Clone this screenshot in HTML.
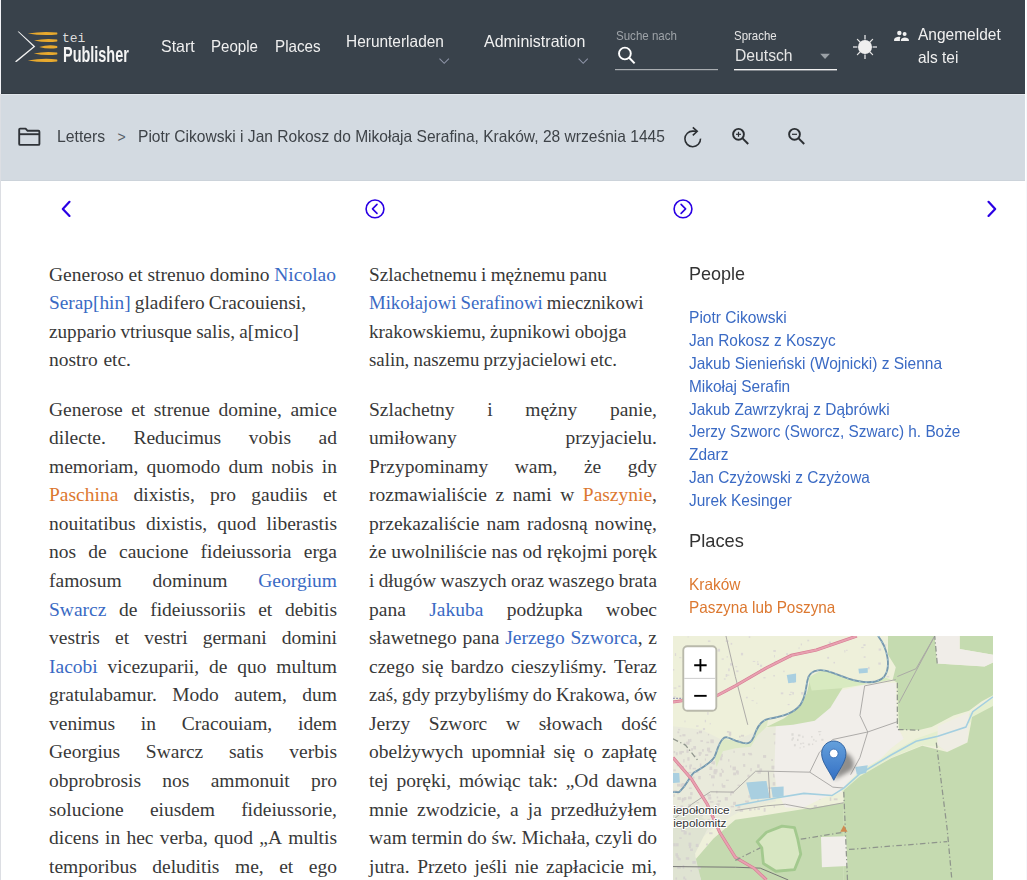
<!DOCTYPE html>
<html><head><meta charset="utf-8"><title>TEI Publisher</title>
<style>
html,body{margin:0;padding:0;background:#fff;width:1027px;height:880px;overflow:hidden;position:relative}
.t{position:absolute;white-space:nowrap}
.ln{position:absolute;font-family:'Liberation Serif', serif;font-size:19.5px;line-height:19.5px;color:#383838;white-space:nowrap;display:flex;justify-content:space-between}
.b{color:#3a6ac4}
.o{color:#dc7830}
#lborder{position:absolute;left:0;top:0;width:1px;height:880px;background:#f3f3f7}
#lborder2{position:absolute;left:0;top:94px;width:1px;height:786px;background:#dcdee3}
#rborder{position:absolute;left:1026px;top:0;width:1px;height:880px;background:#f6f7fb}
#header{position:absolute;left:1px;top:0;width:1024px;height:94px;background:#39424b;overflow:hidden}
#hshadow{position:absolute;left:1px;top:93px;width:1024px;height:1px;background:#323a42}
#toolbar{position:absolute;left:1px;top:94px;width:1024px;height:87px;background:#d3dae1}
#ttop{position:absolute;left:1px;top:94px;width:1024px;height:1px;background:#e1e6eb}
#tbot{position:absolute;left:1px;top:180px;width:1024px;height:1px;background:#ccd3da}
#map{position:absolute;left:673px;top:636px;width:320px;height:244px;overflow:hidden;background:#eef0d8}
</style></head><body>
<div id="lborder"></div><div id="lborder2"></div><div id="rborder"></div>
<div id="header"><div style="position:absolute;left:-1px;top:0;width:1027px;height:94px"><svg style="position:absolute;left:0;top:0" width="140" height="94" viewBox="0 0 140 94">
<path d="M17.6 31.6 L18.8 31.4 L35.3 46.6 L16.6 61.9 L14.9 61.6 L33.3 46.6 Z" fill="#f2f2f2"/>
<g fill="#e8a92e"><path d="M27.8 33.5 Q42.5 31.00 57.1 32.50 Q57.6 33.5 57.1 34.50 Q42.5 36.00 27.8 33.5 Z"/><path d="M34.0 40.5 Q45.5 38.00 57.1 39.50 Q57.6 40.5 57.1 41.50 Q45.5 43.00 34.0 40.5 Z"/><path d="M39.2 46.9 Q48.2 44.40 57.1 45.90 Q57.6 46.9 57.1 47.90 Q48.2 49.40 39.2 46.9 Z"/><path d="M33.7 53.5 Q45.4 51.00 57.1 52.50 Q57.6 53.5 57.1 54.50 Q45.4 56.00 33.7 53.5 Z"/><path d="M27.8 60.4 Q42.5 57.90 57.1 59.40 Q57.6 60.4 57.1 61.40 Q42.5 62.90 27.8 60.4 Z"/></g></svg><svg style="position:absolute;left:0;top:0" width="1024" height="94" viewBox="0 0 1024 94">
<!-- dropdown chevrons -->
<path d="M439.5 58.6 L444.2 63.3 L448.9 58.6" fill="none" stroke="#8d93a6" stroke-width="1.1"/>
<path d="M578.6 58.6 L583.2 63.3 L587.8 58.6" fill="none" stroke="#8d93a6" stroke-width="1.1"/>
<!-- search icon -->
<circle cx="624.9" cy="53.5" r="5.9" fill="none" stroke="#ffffff" stroke-width="1.9"/>
<line x1="629.2" y1="57.8" x2="634.6" y2="63.4" stroke="#ffffff" stroke-width="2"/>
<rect x="615" y="69" width="103" height="1.2" fill="#a9adb1"/>
<!-- select -->
<path d="M820.2 53.8 L829.9 53.8 L825.05 59.1 Z" fill="#9aa0a6"/>
<rect x="734" y="69" width="103" height="1.4" fill="#f0f0f0"/>
<!-- sun -->
<circle cx="865" cy="47" r="7.0" fill="#efefef"/>
<g stroke="#aeb2b6" stroke-width="1.9">
<line x1="865" y1="35" x2="865" y2="39.4"/>
<line x1="865" y1="54.6" x2="865" y2="59"/>
<line x1="853" y1="47" x2="857.4" y2="47"/>
<line x1="872.6" y1="47" x2="877" y2="47"/>
</g>
<g stroke="#e4e4e4" stroke-width="1.2" stroke-linecap="round">
<line x1="857.4" y1="39.4" x2="860" y2="42"/>
<line x1="872.6" y1="39.4" x2="870" y2="42"/>
<line x1="857.4" y1="54.6" x2="860" y2="52"/>
<line x1="872.6" y1="54.6" x2="870" y2="52"/>
</g>
<!-- people icon -->
<g fill="#f0f0f0">
<circle cx="899.35" cy="33.0" r="2.2"/>
<circle cx="904.6" cy="34.0" r="2.0"/>
<path d="M900.9 41 L900.9 40 C900.9 38.3 903 37.4 904.9 37.4 C906.8 37.4 908.9 38.3 908.9 40 L908.9 41 Z"/>
<path d="M894.1 41 L894.1 39.8 C894.1 37.8 896.8 36.8 899.2 36.8 L900.6 37.0 C900.0 37.6 899.9 38.6 899.9 40 L899.9 41 Z"/>
</g>
</svg><div class="t" style="left:161.40px;top:37.73px;font-size:16.5px;line-height:16.5px;color:#f0f0f0;font-family:'Liberation Sans', sans-serif;transform:scaleX(0.9699);transform-origin:0 0;">Start</div><div class="t" style="left:211.30px;top:37.93px;font-size:16.5px;line-height:16.5px;color:#f0f0f0;font-family:'Liberation Sans', sans-serif;transform:scaleX(0.9147);transform-origin:0 0;">People</div><div class="t" style="left:275.30px;top:37.93px;font-size:16.5px;line-height:16.5px;color:#f0f0f0;font-family:'Liberation Sans', sans-serif;transform:scaleX(0.9209);transform-origin:0 0;">Places</div><div class="t" style="left:346.40px;top:33.13px;font-size:16.5px;line-height:16.5px;color:#f0f0f0;font-family:'Liberation Sans', sans-serif;transform:scaleX(0.9363);transform-origin:0 0;">Herunterladen</div><div class="t" style="left:484.10px;top:33.13px;font-size:16.5px;line-height:16.5px;color:#f0f0f0;font-family:'Liberation Sans', sans-serif;transform:scaleX(0.9690);transform-origin:0 0;">Administration</div><div class="t" style="left:615.50px;top:29.70px;font-size:12.4px;line-height:12.4px;color:#9ea3a8;font-family:'Liberation Sans', sans-serif;transform:scaleX(0.9313);transform-origin:0 0;">Suche nach</div><div class="t" style="left:734.30px;top:29.70px;font-size:12.4px;line-height:12.4px;color:#e6e6e6;font-family:'Liberation Sans', sans-serif;transform:scaleX(0.9244);transform-origin:0 0;">Sprache</div><div class="t" style="left:734.60px;top:47.23px;font-size:16.5px;line-height:16.5px;color:#e6e6e6;font-family:'Liberation Sans', sans-serif;transform:scaleX(0.9517);transform-origin:0 0;">Deutsch</div><div class="t" style="left:918.30px;top:25.93px;font-size:16.5px;line-height:16.5px;color:#f0f0f0;font-family:'Liberation Sans', sans-serif;transform:scaleX(0.9391);transform-origin:0 0;">Angemeldet</div><div class="t" style="left:918.30px;top:48.73px;font-size:16.5px;line-height:16.5px;color:#f0f0f0;font-family:'Liberation Sans', sans-serif;transform:scaleX(0.9351);transform-origin:0 0;">als tei</div><div class="t" style="left:62.00px;top:32.04px;font-size:13px;line-height:13px;color:#dedede;font-family:'Liberation Mono', monospace;">tei</div><div class="t" style="left:62.6px;top:45.4px;font-size:21.5px;line-height:21.5px;color:#f4f4f4;font-family:'Liberation Sans', sans-serif;font-weight:bold;transform:scaleX(0.672);transform-origin:0 0;">Publisher</div></div></div>
<div id="hshadow"></div>
<div id="toolbar"></div><div id="ttop"></div><div id="tbot"></div>
<svg style="position:absolute;left:0;top:0" width="1024" height="181" viewBox="0 0 1024 181">
<!-- folder -->
<path d="M19.2 129.4 Q19.2 128.6 20 128.6 L25.6 128.6 L27.6 130.8 L38.4 130.8 Q39.4 130.8 39.4 131.8 L39.4 143.9 Q39.4 144.9 38.4 144.9 L20.2 144.9 Q19.2 144.9 19.2 143.9 Z" fill="none" stroke="#2f3338" stroke-width="1.9" stroke-linejoin="round"/>
<line x1="19.2" y1="134.2" x2="39.4" y2="134.2" stroke="#2f3338" stroke-width="1.9"/>
<!-- refresh -->
<path d="M700.5 138.6 A7.8 7.8 0 1 1 693 131.1 L697 131.2" fill="none" stroke="#2b2f33" stroke-width="1.6"/>
<path d="M692.8 127.3 L697.2 131.3 L692.8 135.3" fill="none" stroke="#2b2f33" stroke-width="1.6"/>
<!-- zoom in -->
<circle cx="738.5" cy="134.3" r="5.4" fill="none" stroke="#2b2f33" stroke-width="1.9"/>
<line x1="742.6" y1="138.4" x2="748.2" y2="144" stroke="#2b2f33" stroke-width="2"/>
<line x1="736" y1="134.3" x2="741" y2="134.3" stroke="#2b2f33" stroke-width="1.2"/>
<line x1="738.5" y1="131.8" x2="738.5" y2="136.8" stroke="#2b2f33" stroke-width="1.2"/>
<!-- zoom out -->
<circle cx="794.5" cy="134.3" r="5.4" fill="none" stroke="#2b2f33" stroke-width="1.9"/>
<line x1="798.6" y1="138.4" x2="804.2" y2="144" stroke="#2b2f33" stroke-width="2"/>
<line x1="792" y1="134.3" x2="797" y2="134.3" stroke="#2b2f33" stroke-width="1.2"/>
</svg>
<div class="t" style="left:56.90px;top:128.23px;font-size:16.5px;line-height:16.5px;color:#3e4348;font-family:'Liberation Sans', sans-serif;transform:scaleX(0.9556);transform-origin:0 0;">Letters</div><div class="t" style="left:117.60px;top:130.35px;font-size:14px;line-height:14px;color:#58606a;font-family:'Liberation Sans', sans-serif;">&gt;</div><div class="t" style="left:137.60px;top:128.23px;font-size:16.5px;line-height:16.5px;color:#3e4348;font-family:'Liberation Sans', sans-serif;transform:scaleX(0.9434);transform-origin:0 0;">Piotr Cikowski i Jan Rokosz do Mikołaja Serafina, Kraków, 28 września 1445</div>
<svg style="position:absolute;left:0;top:181px" width="1024" height="60" viewBox="0 181 1024 60">
<g fill="none" stroke="#2a00e4" stroke-linecap="round" stroke-linejoin="round">
<path d="M69.5 201.8 L62.8 208.9 L69.5 215.9" stroke-width="2.2"/>
<path d="M988.5 201.8 L995.2 208.9 L988.5 215.9" stroke-width="2.2"/>
<circle cx="375" cy="208.9" r="8.9" stroke-width="1.6"/>
<path d="M377 204.4 L372.5 208.9 L377 213.4" stroke-width="1.6"/>
<circle cx="683" cy="208.9" r="8.9" stroke-width="1.6"/>
<path d="M681.1 204.4 L685.6 208.9 L681.1 213.4" stroke-width="1.6"/>
</g></svg>
<div class="ln" style="left:49px;top:264.57px;width:287px;"><span>Generoso</span><span>et</span><span>strenuo</span><span>domino</span><span><span class="b">Nicolao</span></span></div><div class="ln" style="left:49px;top:293.14px;width:257px;font-size:19.33px;"><span><span class="b">Serap[hin]</span></span><span>gladifero</span><span>Cracouiensi,</span></div><div class="ln" style="left:49px;top:321.71px;width:250px;font-size:19.20px;"><span>zuppario</span><span>vtriusque</span><span>salis,</span><span>a[mico]</span></div><div class="ln" style="left:49px;top:350.28px;width:82px;"><span>nostro</span><span>etc.</span></div><div class="ln" style="left:49px;top:399.57px;width:288px;"><span>Generose</span><span>et</span><span>strenue</span><span>domine,</span><span>amice</span></div><div class="ln" style="left:49px;top:428.14px;width:288px;"><span>dilecte.</span><span>Reducimus</span><span>vobis</span><span>ad</span></div><div class="ln" style="left:49px;top:456.71px;width:288px;"><span>memoriam,</span><span>quomodo</span><span>dum</span><span>nobis</span><span>in</span></div><div class="ln" style="left:49px;top:485.28px;width:288px;"><span><span class="o">Paschina</span></span><span>dixistis,</span><span>pro</span><span>gaudiis</span><span>et</span></div><div class="ln" style="left:49px;top:513.85px;width:288px;"><span>nouitatibus</span><span>dixistis,</span><span>quod</span><span>liberastis</span></div><div class="ln" style="left:49px;top:542.42px;width:288px;"><span>nos</span><span>de</span><span>caucione</span><span>fideiussoria</span><span>erga</span></div><div class="ln" style="left:49px;top:570.99px;width:288px;"><span>famosum</span><span>dominum</span><span><span class="b">Georgium</span></span></div><div class="ln" style="left:49px;top:599.56px;width:288px;"><span><span class="b">Swarcz</span></span><span>de</span><span>fideiussoriis</span><span>et</span><span>debitis</span></div><div class="ln" style="left:49px;top:628.13px;width:288px;"><span>vestris</span><span>et</span><span>vestri</span><span>germani</span><span>domini</span></div><div class="ln" style="left:49px;top:656.70px;width:288px;"><span><span class="b">Iacobi</span></span><span>vicezuparii,</span><span>de</span><span>quo</span><span>multum</span></div><div class="ln" style="left:49px;top:685.27px;width:288px;"><span>gratulabamur.</span><span>Modo</span><span>autem,</span><span>dum</span></div><div class="ln" style="left:49px;top:713.84px;width:288px;"><span>venimus</span><span>in</span><span>Cracouiam,</span><span>idem</span></div><div class="ln" style="left:49px;top:742.41px;width:288px;"><span>Georgius</span><span>Swarcz</span><span>satis</span><span>verbis</span></div><div class="ln" style="left:49px;top:770.98px;width:288px;"><span>obprobrosis</span><span>nos</span><span>ammonuit</span><span>pro</span></div><div class="ln" style="left:49px;top:799.55px;width:288px;"><span>solucione</span><span>eiusdem</span><span>fideiussorie,</span></div><div class="ln" style="left:49px;top:828.12px;width:288px;"><span>dicens</span><span>in</span><span>hec</span><span>verba,</span><span>quod</span><span>„A</span><span>multis</span></div><div class="ln" style="left:49px;top:856.69px;width:288px;"><span>temporibus</span><span>deluditis</span><span>me,</span><span>et</span><span>ego</span></div><div class="ln" style="left:369px;top:264.57px;width:238px;font-size:19.23px;"><span>Szlachetnemu</span><span>i</span><span>mężnemu</span><span>panu</span></div><div class="ln" style="left:369px;top:293.14px;width:274.5px;font-size:18.73px;"><span><span class="b">Mikołajowi</span></span><span><span class="b">Serafinowi</span></span><span>miecznikowi</span></div><div class="ln" style="left:369px;top:321.71px;width:257.5px;font-size:19.04px;"><span>krakowskiemu,</span><span>żupnikowi</span><span>obojga</span></div><div class="ln" style="left:369px;top:350.28px;width:248px;font-size:18.85px;"><span>salin,</span><span>naszemu</span><span>przyjacielowi</span><span>etc.</span></div><div class="ln" style="left:369px;top:399.57px;width:288px;"><span>Szlachetny</span><span>i</span><span>mężny</span><span>panie,</span></div><div class="ln" style="left:369px;top:428.14px;width:288px;"><span>umiłowany</span><span>przyjacielu.</span></div><div class="ln" style="left:369px;top:456.71px;width:288px;"><span>Przypominamy</span><span>wam,</span><span>że</span><span>gdy</span></div><div class="ln" style="left:369px;top:485.28px;width:288px;"><span>rozmawialiście</span><span>z</span><span>nami</span><span>w</span><span><span class="o">Paszynie</span>,</span></div><div class="ln" style="left:369px;top:513.85px;width:288px;"><span>przekazaliście</span><span>nam</span><span>radosną</span><span>nowinę,</span></div><div class="ln" style="left:369px;top:542.42px;width:288px;"><span>że</span><span>uwolniliście</span><span>nas</span><span>od</span><span>rękojmi</span><span>poręk</span></div><div class="ln" style="left:369px;top:570.99px;width:288px;font-size:19.22px;"><span>i</span><span>długów</span><span>waszych</span><span>oraz</span><span>waszego</span><span>brata</span></div><div class="ln" style="left:369px;top:599.56px;width:288px;"><span>pana</span><span><span class="b">Jakuba</span></span><span>podżupka</span><span>wobec</span></div><div class="ln" style="left:369px;top:628.13px;width:288px;"><span>sławetnego</span><span>pana</span><span><span class="b">Jerzego</span></span><span><span class="b">Szworca</span>,</span><span>z</span></div><div class="ln" style="left:369px;top:656.70px;width:288px;"><span>czego</span><span>się</span><span>bardzo</span><span>cieszyliśmy.</span><span>Teraz</span></div><div class="ln" style="left:369px;top:685.27px;width:288px;font-size:18.87px;"><span>zaś,</span><span>gdy</span><span>przybyliśmy</span><span>do</span><span>Krakowa,</span><span>ów</span></div><div class="ln" style="left:369px;top:713.84px;width:288px;"><span>Jerzy</span><span>Szworc</span><span>w</span><span>słowach</span><span>dość</span></div><div class="ln" style="left:369px;top:742.41px;width:288px;"><span>obelżywych</span><span>upomniał</span><span>się</span><span>o</span><span>zapłatę</span></div><div class="ln" style="left:369px;top:770.98px;width:288px;"><span>tej</span><span>poręki,</span><span>mówiąc</span><span>tak:</span><span>„Od</span><span>dawna</span></div><div class="ln" style="left:369px;top:799.55px;width:288px;"><span>mnie</span><span>zwodzicie,</span><span>a</span><span>ja</span><span>przedłużyłem</span></div><div class="ln" style="left:369px;top:828.12px;width:288px;"><span>wam</span><span>termin</span><span>do</span><span>św.</span><span>Michała,</span><span>czyli</span><span>do</span></div><div class="ln" style="left:369px;top:856.69px;width:288px;"><span>jutra.</span><span>Przeto</span><span>jeśli</span><span>nie</span><span>zapłacicie</span><span>mi,</span></div>
<div class="t" style="left:688.80px;top:264.66px;font-size:18.6px;line-height:18.6px;color:#333333;font-family:'Liberation Sans', sans-serif;transform:scaleX(0.9686);transform-origin:0 0;">People</div><div class="t" style="left:688.80px;top:309.43px;font-size:16.5px;line-height:16.5px;color:#3a6ac4;font-family:'Liberation Sans', sans-serif;transform:scaleX(0.9430);transform-origin:0 0;">Piotr Cikowski</div><div class="t" style="left:688.80px;top:332.23px;font-size:16.5px;line-height:16.5px;color:#3a6ac4;font-family:'Liberation Sans', sans-serif;transform:scaleX(0.9350);transform-origin:0 0;">Jan Rokosz z Koszyc</div><div class="t" style="left:688.80px;top:355.03px;font-size:16.5px;line-height:16.5px;color:#3a6ac4;font-family:'Liberation Sans', sans-serif;transform:scaleX(0.9394);transform-origin:0 0;">Jakub Sienieński (Wojnicki) z Sienna</div><div class="t" style="left:688.80px;top:377.83px;font-size:16.5px;line-height:16.5px;color:#3a6ac4;font-family:'Liberation Sans', sans-serif;transform:scaleX(0.9350);transform-origin:0 0;">Mikołaj Serafin</div><div class="t" style="left:688.80px;top:400.63px;font-size:16.5px;line-height:16.5px;color:#3a6ac4;font-family:'Liberation Sans', sans-serif;transform:scaleX(0.9350);transform-origin:0 0;">Jakub Zawrzykraj z Dąbrówki</div><div class="t" style="left:688.80px;top:423.43px;font-size:16.5px;line-height:16.5px;color:#3a6ac4;font-family:'Liberation Sans', sans-serif;transform:scaleX(0.9308);transform-origin:0 0;">Jerzy Szworc (Sworcz, Szwarc) h. Boże</div><div class="t" style="left:688.80px;top:446.23px;font-size:16.5px;line-height:16.5px;color:#3a6ac4;font-family:'Liberation Sans', sans-serif;transform:scaleX(0.9350);transform-origin:0 0;">Zdarz</div><div class="t" style="left:688.80px;top:469.03px;font-size:16.5px;line-height:16.5px;color:#3a6ac4;font-family:'Liberation Sans', sans-serif;transform:scaleX(0.9350);transform-origin:0 0;">Jan Czyżowski z Czyżowa</div><div class="t" style="left:688.80px;top:491.83px;font-size:16.5px;line-height:16.5px;color:#3a6ac4;font-family:'Liberation Sans', sans-serif;transform:scaleX(0.9350);transform-origin:0 0;">Jurek Kesinger</div><div class="t" style="left:688.80px;top:531.76px;font-size:18.6px;line-height:18.6px;color:#333333;font-family:'Liberation Sans', sans-serif;transform:scaleX(0.9835);transform-origin:0 0;">Places</div><div class="t" style="left:688.80px;top:576.03px;font-size:16.5px;line-height:16.5px;color:#dc7830;font-family:'Liberation Sans', sans-serif;transform:scaleX(0.9350);transform-origin:0 0;">Kraków</div><div class="t" style="left:688.80px;top:598.73px;font-size:16.5px;line-height:16.5px;color:#dc7830;font-family:'Liberation Sans', sans-serif;transform:scaleX(0.9279);transform-origin:0 0;">Paszyna lub Poszyna</div>
<div id="map"><svg width="320" height="244" viewBox="0 0 1027 783" style="position:absolute;left:0;top:0">
<defs><filter id="blr" x="-50%" y="-50%" width="200%" height="200%"><feGaussianBlur stdDeviation="7"/></filter><linearGradient id="mg" x1="0" y1="0" x2="0" y2="1"><stop offset="0" stop-color="#64a0dc"/><stop offset="1" stop-color="#3470c4"/></linearGradient></defs>
<rect x="0" y="0" width="1027" height="783" fill="#eef0da"/>
<path d="M0 290 L90 300 L180 345 L280 300 L357 280 L330 420 L330 530 L220 560 L150 600 L90 650 L60 720 L0 720 Z" fill="#e9eadb"/>
<rect x="107" y="339" width="9" height="5" fill="#d9d5d0"/>
<rect x="177" y="395" width="4" height="8" fill="#d9d5d0"/>
<rect x="12" y="413" width="5" height="5" fill="#d9d5d0"/>
<rect x="140" y="515" width="5" height="6" fill="#d9d5d0"/>
<rect x="207" y="546" width="9" height="7" fill="#d9d5d0"/>
<rect x="322" y="312" width="11" height="6" fill="#d9d5d0"/>
<rect x="48" y="331" width="6" height="11" fill="#d9d5d0"/>
<rect x="60" y="451" width="9" height="7" fill="#d9d5d0"/>
<rect x="181" y="316" width="4" height="6" fill="#d9d5d0"/>
<rect x="225" y="411" width="7" height="9" fill="#d9d5d0"/>
<rect x="150" y="378" width="10" height="10" fill="#d9d5d0"/>
<rect x="81" y="449" width="8" height="11" fill="#d9d5d0"/>
<rect x="241" y="375" width="12" height="5" fill="#d9d5d0"/>
<rect x="138" y="497" width="5" height="8" fill="#d9d5d0"/>
<rect x="13" y="474" width="10" height="9" fill="#d9d5d0"/>
<rect x="289" y="382" width="10" height="9" fill="#d9d5d0"/>
<rect x="191" y="419" width="11" height="12" fill="#d9d5d0"/>
<rect x="156" y="473" width="4" height="10" fill="#d9d5d0"/>
<rect x="214" y="558" width="11" height="6" fill="#d9d5d0"/>
<rect x="127" y="474" width="4" height="8" fill="#d9d5d0"/>
<rect x="55" y="330" width="4" height="10" fill="#d9d5d0"/>
<rect x="43" y="364" width="7" height="11" fill="#d9d5d0"/>
<rect x="27" y="417" width="8" height="11" fill="#d9d5d0"/>
<rect x="270" y="525" width="6" height="7" fill="#d9d5d0"/>
<rect x="118" y="530" width="12" height="5" fill="#d9d5d0"/>
<rect x="58" y="360" width="6" height="8" fill="#d9d5d0"/>
<rect x="194" y="368" width="4" height="7" fill="#d9d5d0"/>
<rect x="122" y="447" width="12" height="10" fill="#d9d5d0"/>
<rect x="170" y="461" width="9" height="4" fill="#d9d5d0"/>
<rect x="297" y="503" width="11" height="10" fill="#d9d5d0"/>
<rect x="129" y="404" width="5" height="9" fill="#d9d5d0"/>
<rect x="21" y="318" width="6" height="5" fill="#d9d5d0"/>
<rect x="112" y="314" width="4" height="5" fill="#d9d5d0"/>
<rect x="33" y="395" width="4" height="11" fill="#d9d5d0"/>
<rect x="203" y="339" width="6" height="7" fill="#d9d5d0"/>
<rect x="120" y="332" width="11" height="12" fill="#d9d5d0"/>
<rect x="154" y="426" width="5" height="5" fill="#d9d5d0"/>
<rect x="113" y="369" width="11" height="5" fill="#d9d5d0"/>
<rect x="8" y="547" width="8" height="5" fill="#d9d5d0"/>
<rect x="179" y="307" width="8" height="12" fill="#d9d5d0"/>
<rect x="285" y="481" width="6" height="7" fill="#d9d5d0"/>
<rect x="55" y="501" width="8" height="10" fill="#d9d5d0"/>
<rect x="109" y="358" width="10" height="12" fill="#d9d5d0"/>
<rect x="281" y="510" width="11" height="10" fill="#d9d5d0"/>
<rect x="75" y="435" width="7" height="4" fill="#d9d5d0"/>
<rect x="9" y="373" width="6" height="10" fill="#d9d5d0"/>
<rect x="316" y="416" width="11" height="12" fill="#d9d5d0"/>
<rect x="315" y="395" width="6" height="6" fill="#d9d5d0"/>
<rect x="65" y="353" width="9" height="11" fill="#d9d5d0"/>
<rect x="277" y="425" width="9" height="10" fill="#d9d5d0"/>
<rect x="28" y="472" width="11" height="10" fill="#d9d5d0"/>
<rect x="248" y="424" width="5" height="10" fill="#d9d5d0"/>
<rect x="110" y="508" width="12" height="7" fill="#d9d5d0"/>
<rect x="132" y="546" width="10" height="5" fill="#d9d5d0"/>
<rect x="42" y="339" width="11" height="10" fill="#d9d5d0"/>
<rect x="48" y="515" width="12" height="9" fill="#d9d5d0"/>
<rect x="116" y="443" width="5" height="4" fill="#d9d5d0"/>
<rect x="320" y="469" width="8" height="11" fill="#d9d5d0"/>
<rect x="143" y="527" width="11" height="6" fill="#d9d5d0"/>
<rect x="83" y="376" width="6" height="9" fill="#d9d5d0"/>
<rect x="86" y="409" width="5" height="11" fill="#d9d5d0"/>
<rect x="117" y="419" width="9" height="11" fill="#d9d5d0"/>
<rect x="139" y="539" width="8" height="8" fill="#d9d5d0"/>
<rect x="173" y="305" width="8" height="5" fill="#d9d5d0"/>
<rect x="1" y="508" width="5" height="8" fill="#d9d5d0"/>
<rect x="239" y="445" width="7" height="8" fill="#d9d5d0"/>
<rect x="183" y="504" width="5" height="8" fill="#d9d5d0"/>
<rect x="82" y="372" width="10" height="8" fill="#d9d5d0"/>
<rect x="185" y="498" width="11" height="8" fill="#d9d5d0"/>
<rect x="202" y="431" width="8" height="10" fill="#d9d5d0"/>
<rect x="149" y="439" width="8" height="12" fill="#d9d5d0"/>
<rect x="231" y="528" width="12" height="6" fill="#d9d5d0"/>
<rect x="185" y="545" width="11" height="5" fill="#d9d5d0"/>
<rect x="40" y="415" width="5" height="6" fill="#d9d5d0"/>
<rect x="24" y="474" width="10" height="11" fill="#d9d5d0"/>
<rect x="51" y="486" width="9" height="5" fill="#d9d5d0"/>
<rect x="291" y="552" width="6" height="12" fill="#d9d5d0"/>
<rect x="131" y="427" width="12" height="11" fill="#d9d5d0"/>
<rect x="53" y="412" width="8" height="7" fill="#d9d5d0"/>
<rect x="65" y="383" width="10" height="4" fill="#d9d5d0"/>
<rect x="183" y="415" width="4" height="7" fill="#d9d5d0"/>
<rect x="206" y="433" width="5" height="12" fill="#d9d5d0"/>
<rect x="260" y="553" width="5" height="6" fill="#d9d5d0"/>
<rect x="13" y="503" width="6" height="5" fill="#d9d5d0"/>
<rect x="139" y="537" width="11" height="6" fill="#d9d5d0"/>
<rect x="49" y="539" width="9" height="10" fill="#d9d5d0"/>
<rect x="30" y="315" width="10" height="7" fill="#d9d5d0"/>
<rect x="24" y="544" width="9" height="10" fill="#d9d5d0"/>
<rect x="28" y="523" width="5" height="11" fill="#d9d5d0"/>
<rect x="150" y="388" width="8" height="11" fill="#d9d5d0"/>
<rect x="88" y="334" width="8" height="6" fill="#d9d5d0"/>
<rect x="36" y="342" width="4" height="6" fill="#d9d5d0"/>
<rect x="103" y="379" width="10" height="6" fill="#d9d5d0"/>
<rect x="165" y="346" width="7" height="4" fill="#d9d5d0"/>
<rect x="83" y="304" width="10" height="8" fill="#d9d5d0"/>
<rect x="63" y="423" width="11" height="5" fill="#d9d5d0"/>
<rect x="270" y="412" width="8" height="11" fill="#d9d5d0"/>
<rect x="130" y="432" width="10" height="12" fill="#d9d5d0"/>
<rect x="113" y="516" width="10" height="9" fill="#d9d5d0"/>
<rect x="134" y="390" width="4" height="5" fill="#d9d5d0"/>
<rect x="23" y="493" width="6" height="5" fill="#d9d5d0"/>
<rect x="28" y="519" width="11" height="9" fill="#d9d5d0"/>
<rect x="93" y="363" width="6" height="8" fill="#d9d5d0"/>
<rect x="52" y="416" width="6" height="12" fill="#d9d5d0"/>
<rect x="321" y="442" width="6" height="12" fill="#d9d5d0"/>
<rect x="102" y="393" width="4" height="7" fill="#d9d5d0"/>
<rect x="157" y="431" width="6" height="8" fill="#d9d5d0"/>
<rect x="2" y="369" width="5" height="7" fill="#d9d5d0"/>
<rect x="14" y="306" width="6" height="6" fill="#d9d5d0"/>
<rect x="193" y="438" width="10" height="9" fill="#d9d5d0"/>
<rect x="236" y="529" width="7" height="7" fill="#d9d5d0"/>
<rect x="325" y="339" width="10" height="9" fill="#d9d5d0"/>
<rect x="14" y="517" width="11" height="9" fill="#d9d5d0"/>
<rect x="242" y="511" width="5" height="8" fill="#d9d5d0"/>
<rect x="166" y="517" width="10" height="11" fill="#d9d5d0"/>
<rect x="193" y="532" width="9" height="10" fill="#d9d5d0"/>
<rect x="76" y="308" width="5" height="7" fill="#d9d5d0"/>
<rect x="35" y="517" width="8" height="9" fill="#d9d5d0"/>
<rect x="207" y="477" width="8" height="4" fill="#d9d5d0"/>
<rect x="263" y="495" width="8" height="8" fill="#d9d5d0"/>
<rect x="218" y="317" width="10" height="6" fill="#d9d5d0"/>
<rect x="25" y="369" width="10" height="6" fill="#d9d5d0"/>
<rect x="244" y="554" width="8" height="7" fill="#d9d5d0"/>
<rect x="158" y="478" width="10" height="9" fill="#d9d5d0"/>
<rect x="212" y="320" width="5" height="6" fill="#d9d5d0"/>
<rect x="245" y="379" width="9" height="4" fill="#d9d5d0"/>
<rect x="20" y="370" width="9" height="10" fill="#d9d5d0"/>
<rect x="223" y="376" width="8" height="8" fill="#d9d5d0"/>
<rect x="154" y="331" width="11" height="6" fill="#d9d5d0"/>
<rect x="323" y="543" width="4" height="8" fill="#d9d5d0"/>
<rect x="271" y="552" width="8" height="6" fill="#d9d5d0"/>
<rect x="69" y="546" width="6" height="9" fill="#d9d5d0"/>
<rect x="47" y="436" width="12" height="5" fill="#d9d5d0"/>
<rect x="271" y="432" width="11" height="10" fill="#d9d5d0"/>
<rect x="76" y="533" width="8" height="4" fill="#d9d5d0"/>
<rect x="1" y="428" width="8" height="6" fill="#d9d5d0"/>
<rect x="46" y="389" width="7" height="11" fill="#d9d5d0"/>
<rect x="1" y="495" width="11" height="5" fill="#d9d5d0"/>
<rect x="306" y="485" width="11" height="6" fill="#d9d5d0"/>
<rect x="123" y="402" width="12" height="9" fill="#d9d5d0"/>
<rect x="43" y="655" width="6" height="4" fill="#d9d5d0"/>
<rect x="12" y="746" width="6" height="11" fill="#d9d5d0"/>
<rect x="30" y="619" width="8" height="6" fill="#d9d5d0"/>
<rect x="45" y="773" width="11" height="10" fill="#d9d5d0"/>
<rect x="76" y="764" width="12" height="8" fill="#d9d5d0"/>
<rect x="86" y="571" width="10" height="8" fill="#d9d5d0"/>
<rect x="90" y="704" width="6" height="4" fill="#d9d5d0"/>
<rect x="111" y="588" width="8" height="7" fill="#d9d5d0"/>
<rect x="36" y="725" width="12" height="6" fill="#d9d5d0"/>
<rect x="79" y="627" width="8" height="7" fill="#d9d5d0"/>
<rect x="20" y="596" width="6" height="11" fill="#d9d5d0"/>
<rect x="60" y="609" width="11" height="12" fill="#d9d5d0"/>
<rect x="54" y="591" width="6" height="5" fill="#d9d5d0"/>
<rect x="41" y="580" width="6" height="6" fill="#d9d5d0"/>
<rect x="68" y="758" width="10" height="7" fill="#d9d5d0"/>
<rect x="50" y="677" width="7" height="7" fill="#d9d5d0"/>
<rect x="7" y="622" width="12" height="5" fill="#d9d5d0"/>
<rect x="60" y="700" width="11" height="6" fill="#d9d5d0"/>
<rect x="33" y="615" width="7" height="8" fill="#d9d5d0"/>
<rect x="114" y="749" width="11" height="4" fill="#d9d5d0"/>
<rect x="4" y="718" width="11" height="8" fill="#d9d5d0"/>
<rect x="70" y="560" width="7" height="11" fill="#d9d5d0"/>
<rect x="99" y="751" width="12" height="6" fill="#d9d5d0"/>
<rect x="13" y="594" width="8" height="9" fill="#d9d5d0"/>
<rect x="113" y="721" width="9" height="10" fill="#d9d5d0"/>
<rect x="55" y="683" width="4" height="10" fill="#d9d5d0"/>
<rect x="28" y="765" width="9" height="6" fill="#d9d5d0"/>
<rect x="15" y="616" width="9" height="10" fill="#d9d5d0"/>
<rect x="13" y="576" width="8" height="9" fill="#d9d5d0"/>
<rect x="47" y="610" width="9" height="4" fill="#d9d5d0"/>
<rect x="36" y="663" width="12" height="9" fill="#d9d5d0"/>
<rect x="106" y="666" width="6" height="6" fill="#d9d5d0"/>
<rect x="115" y="717" width="6" height="4" fill="#d9d5d0"/>
<rect x="60" y="710" width="7" height="6" fill="#d9d5d0"/>
<rect x="80" y="766" width="6" height="4" fill="#d9d5d0"/>
<rect x="41" y="654" width="9" height="6" fill="#d9d5d0"/>
<rect x="96" y="725" width="8" height="6" fill="#d9d5d0"/>
<rect x="116" y="630" width="11" height="6" fill="#d9d5d0"/>
<rect x="27" y="730" width="6" height="12" fill="#d9d5d0"/>
<rect x="59" y="602" width="6" height="7" fill="#d9d5d0"/>
<rect x="516" y="209" width="4" height="5" fill="#dcd9d6"/>
<rect x="267" y="214" width="4" height="3" fill="#dcd9d6"/>
<rect x="183" y="87" width="8" height="8" fill="#dcd9d6"/>
<rect x="553" y="219" width="9" height="5" fill="#dcd9d6"/>
<rect x="252" y="206" width="7" height="3" fill="#dcd9d6"/>
<rect x="515" y="83" width="5" height="5" fill="#dcd9d6"/>
<rect x="243" y="1" width="5" height="5" fill="#dcd9d6"/>
<rect x="676" y="27" width="9" height="4" fill="#dcd9d6"/>
<rect x="346" y="181" width="8" height="6" fill="#dcd9d6"/>
<rect x="177" y="104" width="5" height="9" fill="#dcd9d6"/>
<rect x="256" y="80" width="8" height="3" fill="#dcd9d6"/>
<rect x="376" y="179" width="8" height="3" fill="#dcd9d6"/>
<rect x="169" y="14" width="9" height="5" fill="#dcd9d6"/>
<rect x="561" y="198" width="5" height="5" fill="#dcd9d6"/>
<rect x="677" y="136" width="5" height="7" fill="#dcd9d6"/>
<rect x="324" y="61" width="3" height="8" fill="#dcd9d6"/>
<rect x="654" y="139" width="9" height="3" fill="#dcd9d6"/>
<rect x="279" y="105" width="9" height="9" fill="#dcd9d6"/>
<rect x="363" y="55" width="6" height="6" fill="#dcd9d6"/>
<rect x="660" y="40" width="8" height="7" fill="#dcd9d6"/>
<rect x="603" y="170" width="7" height="5" fill="#dcd9d6"/>
<rect x="326" y="80" width="8" height="3" fill="#dcd9d6"/>
<rect x="259" y="166" width="4" height="3" fill="#dcd9d6"/>
<rect x="169" y="122" width="5" height="9" fill="#dcd9d6"/>
<rect x="636" y="217" width="5" height="4" fill="#dcd9d6"/>
<rect x="203" y="110" width="7" height="6" fill="#dcd9d6"/>
<rect x="279" y="92" width="7" height="7" fill="#dcd9d6"/>
<rect x="561" y="186" width="7" height="4" fill="#dcd9d6"/>
<rect x="612" y="65" width="6" height="5" fill="#dcd9d6"/>
<rect x="556" y="44" width="4" height="4" fill="#dcd9d6"/>
<rect x="234" y="195" width="6" height="5" fill="#dcd9d6"/>
<rect x="368" y="218" width="6" height="4" fill="#dcd9d6"/>
<rect x="595" y="144" width="9" height="4" fill="#dcd9d6"/>
<rect x="411" y="180" width="8" height="8" fill="#dcd9d6"/>
<rect x="172" y="65" width="4" height="4" fill="#dcd9d6"/>
<rect x="685" y="128" width="9" height="5" fill="#dcd9d6"/>
<rect x="626" y="99" width="5" height="8" fill="#dcd9d6"/>
<rect x="670" y="23" width="7" height="7" fill="#dcd9d6"/>
<rect x="270" y="81" width="4" height="4" fill="#dcd9d6"/>
<rect x="290" y="132" width="7" height="4" fill="#dcd9d6"/>
<rect x="156" y="72" width="7" height="4" fill="#dcd9d6"/>
<rect x="322" y="45" width="8" height="6" fill="#dcd9d6"/>
<rect x="185" y="22" width="5" height="6" fill="#dcd9d6"/>
<rect x="502" y="20" width="4" height="7" fill="#dcd9d6"/>
<rect x="375" y="62" width="5" height="9" fill="#dcd9d6"/>
<rect x="322" y="125" width="5" height="5" fill="#dcd9d6"/>
<rect x="625" y="219" width="5" height="4" fill="#dcd9d6"/>
<rect x="550" y="45" width="3" height="8" fill="#dcd9d6"/>
<rect x="383" y="180" width="5" height="8" fill="#dcd9d6"/>
<rect x="403" y="36" width="3" height="6" fill="#dcd9d6"/>
<rect x="502" y="200" width="4" height="7" fill="#dcd9d6"/>
<rect x="354" y="111" width="4" height="5" fill="#dcd9d6"/>
<rect x="437" y="204" width="4" height="6" fill="#dcd9d6"/>
<rect x="593" y="213" width="4" height="4" fill="#dcd9d6"/>
<rect x="669" y="215" width="6" height="3" fill="#dcd9d6"/>
<rect x="659" y="85" width="8" height="7" fill="#dcd9d6"/>
<rect x="604" y="35" width="8" height="4" fill="#dcd9d6"/>
<rect x="372" y="186" width="8" height="4" fill="#dcd9d6"/>
<rect x="270" y="88" width="6" height="5" fill="#dcd9d6"/>
<rect x="218" y="54" width="7" height="8" fill="#dcd9d6"/>
<rect x="173" y="124" width="8" height="3" fill="#dcd9d6"/>
<rect x="611" y="26" width="7" height="6" fill="#dcd9d6"/>
<rect x="495" y="67" width="6" height="6" fill="#dcd9d6"/>
<rect x="384" y="145" width="6" height="6" fill="#dcd9d6"/>
<rect x="163" y="136" width="6" height="4" fill="#dcd9d6"/>
<rect x="570" y="172" width="6" height="4" fill="#dcd9d6"/>
<rect x="410" y="24" width="4" height="6" fill="#dcd9d6"/>
<rect x="200" y="97" width="6" height="3" fill="#dcd9d6"/>
<rect x="500" y="18" width="7" height="8" fill="#dcd9d6"/>
<rect x="431" y="12" width="6" height="5" fill="#dcd9d6"/>
<rect x="143" y="41" width="8" height="9" fill="#dcd9d6"/>
<rect x="110" y="244" width="4" height="9" fill="#dcd9d6"/>
<rect x="74" y="287" width="8" height="4" fill="#dcd9d6"/>
<rect x="118" y="279" width="3" height="5" fill="#dcd9d6"/>
<rect x="113" y="48" width="8" height="5" fill="#dcd9d6"/>
<rect x="122" y="43" width="6" height="9" fill="#dcd9d6"/>
<rect x="31" y="79" width="6" height="5" fill="#dcd9d6"/>
<rect x="6" y="55" width="4" height="9" fill="#dcd9d6"/>
<rect x="102" y="269" width="4" height="8" fill="#dcd9d6"/>
<rect x="17" y="159" width="7" height="5" fill="#dcd9d6"/>
<rect x="131" y="167" width="6" height="8" fill="#dcd9d6"/>
<rect x="16" y="298" width="7" height="5" fill="#dcd9d6"/>
<rect x="120" y="79" width="9" height="6" fill="#dcd9d6"/>
<rect x="54" y="229" width="6" height="4" fill="#dcd9d6"/>
<rect x="112" y="14" width="8" height="5" fill="#dcd9d6"/>
<rect x="96" y="295" width="7" height="7" fill="#dcd9d6"/>
<rect x="47" y="1" width="3" height="4" fill="#dcd9d6"/>
<rect x="92" y="130" width="6" height="8" fill="#dcd9d6"/>
<rect x="20" y="68" width="7" height="3" fill="#dcd9d6"/>
<rect x="0" y="106" width="4" height="5" fill="#dcd9d6"/>
<rect x="34" y="175" width="7" height="4" fill="#dcd9d6"/>
<rect x="94" y="142" width="4" height="9" fill="#dcd9d6"/>
<rect x="37" y="45" width="4" height="7" fill="#dcd9d6"/>
<rect x="131" y="235" width="5" height="5" fill="#dcd9d6"/>
<rect x="2" y="193" width="6" height="5" fill="#dcd9d6"/>
<rect x="97" y="133" width="9" height="7" fill="#dcd9d6"/>
<rect x="37" y="271" width="3" height="6" fill="#dcd9d6"/>
<rect x="61" y="71" width="3" height="8" fill="#dcd9d6"/>
<rect x="2" y="165" width="9" height="4" fill="#dcd9d6"/>
<rect x="30" y="182" width="6" height="7" fill="#dcd9d6"/>
<rect x="653" y="469" width="6" height="6" fill="#d9d5d0"/>
<rect x="462" y="548" width="10" height="10" fill="#d9d5d0"/>
<rect x="452" y="543" width="10" height="8" fill="#d9d5d0"/>
<rect x="635" y="500" width="6" height="5" fill="#d9d5d0"/>
<rect x="508" y="454" width="7" height="10" fill="#d9d5d0"/>
<rect x="624" y="543" width="10" height="6" fill="#d9d5d0"/>
<rect x="588" y="498" width="10" height="8" fill="#d9d5d0"/>
<rect x="516" y="521" width="12" height="6" fill="#d9d5d0"/>
<rect x="670" y="452" width="6" height="6" fill="#d9d5d0"/>
<rect x="636" y="554" width="10" height="7" fill="#d9d5d0"/>
<rect x="670" y="486" width="6" height="11" fill="#d9d5d0"/>
<rect x="608" y="526" width="9" height="12" fill="#d9d5d0"/>
<rect x="567" y="542" width="10" height="11" fill="#d9d5d0"/>
<rect x="559" y="530" width="9" height="6" fill="#d9d5d0"/>
<rect x="503" y="518" width="5" height="11" fill="#d9d5d0"/>
<rect x="486" y="453" width="5" height="11" fill="#d9d5d0"/>
<rect x="536" y="466" width="4" height="4" fill="#d9d5d0"/>
<rect x="623" y="520" width="10" height="10" fill="#d9d5d0"/>
<rect x="466" y="515" width="7" height="11" fill="#d9d5d0"/>
<rect x="655" y="548" width="5" height="11" fill="#d9d5d0"/>
<rect x="679" y="554" width="5" height="6" fill="#d9d5d0"/>
<rect x="478" y="454" width="11" height="10" fill="#d9d5d0"/>
<rect x="609" y="541" width="9" height="6" fill="#d9d5d0"/>
<rect x="475" y="461" width="10" height="6" fill="#d9d5d0"/>
<rect x="530" y="497" width="4" height="6" fill="#d9d5d0"/>
<path d="M330 285 L430 235 L520 180 L640 150 L715 150 L720 290 L740 330 L700 360 L660 400 L600 430 L560 470 L545 500 L480 520 L420 550 L360 550 L335 500 L325 440 Z" fill="#f1eeea"/>
<rect x="408" y="343" width="5" height="5" fill="#dcdad6"/>
<rect x="476" y="330" width="7" height="6" fill="#dcdad6"/>
<rect x="383" y="325" width="5" height="7" fill="#dcdad6"/>
<rect x="415" y="342" width="6" height="4" fill="#dcdad6"/>
<rect x="466" y="305" width="7" height="4" fill="#dcdad6"/>
<rect x="380" y="312" width="7" height="8" fill="#dcdad6"/>
<rect x="380" y="329" width="5" height="7" fill="#dcdad6"/>
<rect x="398" y="330" width="5" height="7" fill="#dcdad6"/>
<rect x="406" y="357" width="4" height="4" fill="#dcdad6"/>
<rect x="450" y="330" width="4" height="6" fill="#dcdad6"/>
<rect x="388" y="347" width="6" height="7" fill="#dcdad6"/>
<rect x="443" y="321" width="5" height="5" fill="#dcdad6"/>
<rect x="469" y="305" width="7" height="3" fill="#dcdad6"/>
<rect x="401" y="316" width="8" height="6" fill="#dcdad6"/>
<rect x="418" y="353" width="4" height="5" fill="#dcdad6"/>
<rect x="433" y="345" width="7" height="6" fill="#dcdad6"/>
<rect x="415" y="320" width="4" height="7" fill="#dcdad6"/>
<rect x="446" y="345" width="4" height="5" fill="#dcdad6"/>
<rect x="457" y="335" width="4" height="5" fill="#dcdad6"/>
<rect x="469" y="314" width="4" height="5" fill="#dcdad6"/>
<path d="M540 495 L600 435 L700 375 L780 330 L850 305 L950 250 L1027 200 L1027 230 L950 280 L880 360 L800 350 L700 390 L600 450 L550 510 Z" fill="#e5efcf"/>
<path d="M850 290 L950 245 L945 340 L880 372 L848 350 Z" fill="#efede4"/>
<path d="M300 292 L357 264 L408 224 L430 182 L440 137 L520 132 L545 165 L505 230 L455 272 L385 285 Z" fill="#c9deb0"/>
<path d="M434 133 L480 108 L563 137 L623 154 L678 132 L700 140 L640 152 L540 168 L445 175 Z" fill="#d8eac0"/>
<path d="M133 388 L160 330 L204 337 L240 345 L262 322 L276 283 L306 268 L300 292 L270 320 L250 355 L200 360 L160 370 L140 420 Z" fill="#dde9c6"/>
<path d="M690 0 L840 0 L848 88 L1000 98 L1027 85 L1027 190 L990 210 L950 240 L900 255 L830 292 L790 302 L725 302 L720 150 L705 140 L715 100 L690 60 Z" fill="#c5dbb0"/>
<path d="M920 0 L1027 0 L1027 60 L920 42 Z" fill="#c5dbb0"/>
<path d="M840 0 L920 0 L920 42 L1027 60 L1027 85 L1000 98 L848 88 Z" fill="#f0ede8"/>
<path d="M548 495 L600 450 L700 392 L800 352 L880 372 L945 342 L960 260 L1027 225 L1027 783 L548 783 Z" fill="#c5dab0"/>
<path d="M130 650 L200 590 L330 570 L420 555 L548 535 L548 783 L90 783 L70 720 Z" fill="#c5dab0"/>
<path d="M0 560 L60 560 L120 600 L70 700 L90 783 L0 783 Z" fill="#dfe3d2"/>
<rect x="56" y="751" width="5" height="5" fill="#d5d3cf"/>
<rect x="20" y="646" width="8" height="5" fill="#d5d3cf"/>
<rect x="26" y="618" width="12" height="10" fill="#d5d3cf"/>
<rect x="8" y="775" width="5" height="7" fill="#d5d3cf"/>
<rect x="79" y="741" width="10" height="7" fill="#d5d3cf"/>
<rect x="16" y="710" width="5" height="6" fill="#d5d3cf"/>
<rect x="31" y="587" width="7" height="10" fill="#d5d3cf"/>
<rect x="55" y="682" width="9" height="8" fill="#d5d3cf"/>
<rect x="11" y="703" width="7" height="10" fill="#d5d3cf"/>
<rect x="73" y="667" width="9" height="10" fill="#d5d3cf"/>
<rect x="34" y="626" width="10" height="11" fill="#d5d3cf"/>
<rect x="62" y="722" width="11" height="9" fill="#d5d3cf"/>
<rect x="51" y="672" width="7" height="9" fill="#d5d3cf"/>
<rect x="8" y="665" width="10" height="10" fill="#d5d3cf"/>
<rect x="50" y="631" width="7" height="8" fill="#d5d3cf"/>
<rect x="50" y="663" width="9" height="11" fill="#d5d3cf"/>
<rect x="15" y="713" width="10" height="7" fill="#d5d3cf"/>
<rect x="39" y="778" width="4" height="8" fill="#d5d3cf"/>
<rect x="13" y="739" width="12" height="8" fill="#d5d3cf"/>
<rect x="8" y="697" width="8" height="10" fill="#d5d3cf"/>
<rect x="41" y="710" width="11" height="8" fill="#d5d3cf"/>
<rect x="33" y="772" width="6" height="9" fill="#d5d3cf"/>
<rect x="31" y="735" width="5" height="12" fill="#d5d3cf"/>
<rect x="28" y="591" width="6" height="7" fill="#d5d3cf"/>
<rect x="1" y="665" width="7" height="10" fill="#d5d3cf"/>
<path d="M475 645 L555 643 L560 738 L478 742 Z" fill="#f1eeea"/>
<path d="M300 630 L350 610 L390 615 L400 650 L410 700 L390 750 L330 755 L290 730 L285 680 L270 660 Z" fill="#d8e7c2" stroke="#a3c98e" stroke-width="9" stroke-linejoin="round"/>
<g fill="#a9cfe0"><path d="M235 470 L300 465 L310 520 L250 525 Z"/><path d="M315 485 L355 483 L355 515 L320 518 Z"/><path d="M365 125 L395 120 L395 148 L370 152 Z"/><path d="M0 440 L20 440 L22 470 L0 472 Z"/><path d="M585 420 L625 415 L620 440 L590 445 Z"/><path d="M595 105 L625 103 L625 118 L597 120 Z"/></g>
<g fill="none" stroke="#a8a6a4" stroke-width="3"><path d="M170 0 L200 130 L240 285"/><path d="M200 560 L300 545 L360 540 L440 555 L548 535"/><path d="M194 501 L265 434 L306 434 L439 437 L513 485 L548 488"/><path d="M306 434 L311 520"/><path d="M439 437 L470 373 L513 332 L625 308 L720 275"/><path d="M625 308 L600 255 L615 160 L715 140"/><path d="M625 308 L600 390 L570 445"/><path d="M720 130 L780 105 L840 0"/><path d="M725 215 L840 0"/><path d="M0 590 L60 540 L120 500 L194 501"/></g>
<path d="M0 740 L200 742 L280 745 L370 783" fill="none" stroke="#707070" stroke-width="3"/>
<path d="M200 545 L330 520 L420 505 L510 512 L548 488 L600 442 L700 382 L780 338 L850 322 L940 292 L962 243 L1027 195" fill="none" stroke="#a4cfe0" stroke-width="5"/>
<path d="M658 0 C690 40 700 100 678 130 C660 150 620 155 563 137 L513 118 C480 105 445 105 434 133 C425 160 430 190 408 222 C390 245 360 256 306 266 C285 270 270 290 260 322 C252 340 245 348 224 343 L204 337 C185 330 170 318 160 330 C145 345 140 375 133 388 C120 410 90 425 66 439 C50 455 48 475 20 501 L0 501" fill="none" stroke="#7598ae" stroke-width="6"/>
<path d="M658 0 C690 40 700 100 678 130 C660 150 620 155 563 137 L513 118 C480 105 445 105 434 133 C425 160 430 190 408 222 C390 245 360 256 306 266 C285 270 270 290 260 322 C252 340 245 348 224 343 L204 337 C185 330 170 318 160 330 C145 345 140 375 133 388 C120 410 90 425 66 439 C50 455 48 475 20 501 L0 501" fill="none" stroke="#b8d8e6" stroke-width="2" stroke-dasharray="6 14"/>
<path d="M0 210 L40 210 M0 200 L40 200" stroke="#9a9ab8" stroke-width="4" stroke-dasharray="6 4"/>
<path d="M0 212 L140 192 L200 160 L300 102 L380 62 L460 45 L590 0" fill="none" stroke="#d77b92" stroke-width="10"/>
<path d="M0 212 L140 192 L200 160 L300 102 L380 62 L460 45 L590 0" fill="none" stroke="#e8a1b1" stroke-width="6"/>
<path d="M0 390 L60 460 L110 540 L150 630 L200 710 L260 745 L300 783" fill="none" stroke="#d77b92" stroke-width="10"/>
<path d="M0 390 L60 460 L110 540 L150 630 L200 710 L260 745 L300 783" fill="none" stroke="#e8a1b1" stroke-width="6"/>
<g fill="none" stroke="#8f958c" stroke-width="4" stroke-dasharray="18 8 4 8"><path d="M548 500 L560 783"/><path d="M845 342 L880 620 L895 783"/><path d="M565 685 L880 660"/><path d="M410 652 L545 630"/><path d="M200 720 L280 680"/><path d="M848 88 L840 0"/><path d="M720 150 L720 300 L790 302"/><path d="M0 330 L40 350 L80 400"/></g>
<path d="M537 628 L548 607 L560 628 Z" fill="#cf8a50"/>
<g font-family="'Liberation Sans', sans-serif" font-size="38" fill="#333" stroke="#ffffff" stroke-width="7" stroke-linejoin="round" paint-order="stroke"><text x="-27" y="570">Niepołomice</text><text x="-27" y="612">Niepolomitz</text></g>
<path d="M516 462 L575 430 Q590 405 565 380 L545 370 L530 420 Z" fill="#000" opacity="0.4" filter="url(#blr)"/>
<path d="M516 463 C500 430 477 405 477 377 C477 354 495 337 516 337 C537 337 555 354 555 377 C555 405 532 430 516 463 Z" fill="url(#mg)" stroke="#2c5e9e" stroke-width="3"/>
<circle cx="516" cy="377" r="14" fill="#ffffff" stroke="#3a6fb5" stroke-width="3"/>
<rect x="33" y="33" width="106" height="207" rx="13" fill="#ffffff" stroke="#b9b9ab" stroke-width="6"/>
<line x1="36" y1="136" x2="136" y2="136" stroke="#c9c9c9" stroke-width="3"/>
<path d="M68 94 L108 94 M88 74 L88 114" stroke="#000" stroke-width="6"/>
<path d="M68 192 L108 192" stroke="#000" stroke-width="6"/>
</svg></div>
</body></html>
